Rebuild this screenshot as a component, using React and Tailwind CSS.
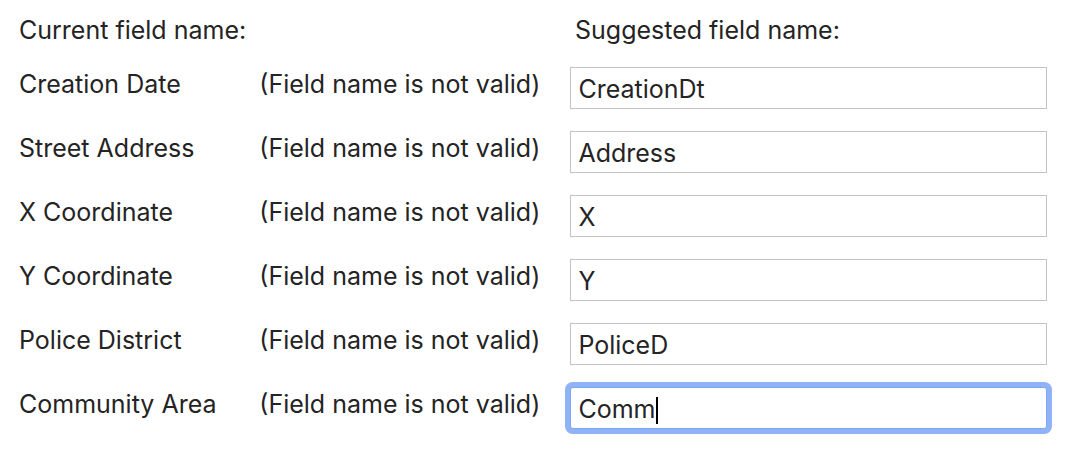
import React from "react";

const rows = [
  { name: "Creation Date", value: "CreationDt" },
  { name: "Street Address", value: "Address" },
  { name: "X Coordinate", value: "X" },
  { name: "Y Coordinate", value: "Y" },
  { name: "Police District", value: "PoliceD" },
  { name: "Community Area", value: "Comm", focused: true },
];

const App = () => {
  return (
    <div
      className="w-[1066px] h-[452px] bg-white text-[#242424] text-[25px] px-[19px] pt-[14px]"
      style={{ fontFamily: "Inter, 'Noto Sans', sans-serif" }}
    >
      <div className="flex items-center h-[34px]">
        <div className="w-[556px]">Current field name:</div>
        <div>Suggested field name:</div>
      </div>
      <div className="flex flex-col gap-[22px] mt-[19px]">
        {rows.map((row) => (
          <div key={row.name} className="flex items-center h-[42px]">
            <div className="w-[241px] mb-[6px]">{row.name}</div>
            <div className="w-[311px] mb-[6px]">(Field name is not valid)</div>
            <div
              className={
                row.focused
                  ? "ml-[1px] w-[478px] h-[42px] border border-[#7ea6ef] rounded-[3px] ring-[5px] ring-[#8fb3f6] flex items-center pl-[7px] pt-[4px] bg-white"
                  : "ml-[1px] w-[478px] h-[42px] border border-[#c3c3c3] flex items-center pl-[7px] pt-[4px] bg-white"
              }
            >
              <span>{row.value}</span>
              {row.focused && <span className="w-[2px] h-[27px] bg-black ml-[1px]" />}
            </div>
          </div>
        ))}
      </div>
    </div>
  );
};

export default App;
